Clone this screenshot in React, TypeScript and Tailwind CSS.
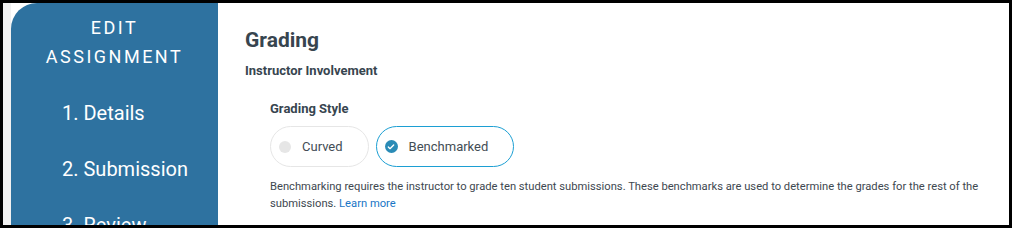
import { Check } from "lucide-react";

const font = { fontFamily: "Roboto, 'Liberation Sans', sans-serif" };

interface PillProps {
  label: string;
  selected?: boolean;
}

function StylePill({ label, selected }: PillProps) {
  return (
    <button
      type="button"
      className={
        selected
          ? "flex h-[41px] items-center rounded-full border-[1.5px] border-[#1c9fd3] bg-white pl-[8px] pr-[25px]"
          : "flex h-[41px] items-center rounded-full border border-[#e6e6e6] bg-white pl-[8px] pr-[25px]"
      }
    >
      {selected ? (
        <span className="grid h-[13px] w-[13px] place-items-center rounded-full bg-[#2a8bb6]">
          <Check aria-hidden className="h-[8px] w-[8px] text-white" strokeWidth={4} />
        </span>
      ) : (
        <span className="h-[12px] w-[12px] rounded-full bg-[#e6e6e6]" />
      )}
      <span className="ml-[11px] text-[13px] leading-none text-[#434d55]">{label}</span>
    </button>
  );
}

export default function App() {
  return (
    <div
      className="flex h-[228px] w-[1012px] overflow-hidden border-[3px] border-black bg-white"
      style={font}
    >
      <div className="w-[8px] shrink-0 bg-[#f1f1f1]" />

      <aside className="w-[207px] shrink-0 rounded-tl-[26px] bg-[#2e72a0] pt-[10px] text-white">
        <div className="text-center text-[18px] uppercase leading-[29px] tracking-[2.5px]">
          <p>Edit</p>
          <p>Assignment</p>
        </div>
        <nav className="mt-[28px] flex flex-col gap-[28px] pl-[51px] text-[20px] leading-[28px]">
          <p>1. Details</p>
          <p>2. Submission</p>
          <p>3. Review</p>
        </nav>
      </aside>

      <main className="flex-1 pl-[27px] pt-[23px] text-[#37454f]">
        <h2 className="text-[21px] font-bold leading-[28px]">Grading</h2>
        <p className="mt-[8px] text-[13px] font-bold leading-[18px]">
          Instructor Involvement
        </p>

        <div className="pl-[25px]">
          <p className="mt-[20px] text-[13px] font-bold leading-[18px]">Grading Style</p>
          <div className="mt-[8px] flex gap-[7px]">
            <StylePill label="Curved" />
            <StylePill label="Benchmarked" selected />
          </div>
          <p className="mt-[11px] w-[720px] text-[11.2px] leading-[17px] text-[#3e4850]">
            Benchmarking requires the instructor to grade ten student submissions. These
            benchmarks are used to determine the grades for the rest of the submissions.{" "}
            <a className="text-[#1976c6]" href="#">
              Learn more
            </a>
          </p>
        </div>
      </main>
    </div>
  );
}
